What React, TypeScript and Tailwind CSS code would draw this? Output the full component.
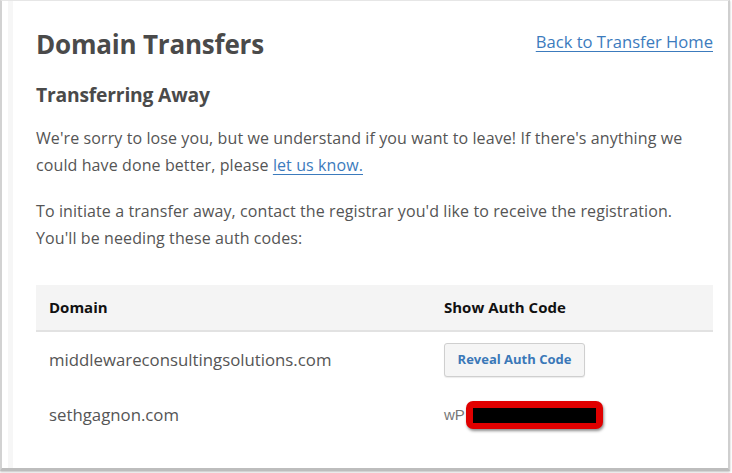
import React from "react";

const domains = [
  { name: "middlewareconsultingsolutions.com", revealed: false },
  { name: "sethgagnon.com", revealed: true },
];

const App = () => {
  return (
    <div className="w-[732px] h-[473px] bg-white overflow-hidden">
      <div className="w-[730px] h-[471px] bg-white border-l-2 border-t border-r-2 border-b-[3px] border-l-[#d2d2d2] border-t-[#e6e6e6] border-r-[#cfcfcf] border-b-[#bdbdbd] shadow-[0_1px_2px_rgba(0,0,0,0.25)]">
        <div className="ml-[6px] h-full border-l-[5px] border-[#f6f6f6] pl-[23px] pr-[15px] pt-[25px] font-['Open_Sans',sans-serif] text-[#555]">
          <div className="flex items-start justify-between">
            <h1 className="font-bold text-[26px] leading-[36px] text-[#4a4a4a] tracking-[-0.2px]">
              Domain Transfers
            </h1>
            <a href="#" className="mt-[6px] text-[16.6px] leading-[20px] text-[#3c7bbd] underline underline-offset-[3px]">
              Back to Transfer Home
            </a>
          </div>
          <h2 className="mt-[20px] font-bold text-[19.3px] leading-[26px] text-[#4a4a4a] tracking-[-0.2px]">
            Transferring Away
          </h2>
          <p className="mt-[17px] text-[16px] leading-[27px] tracking-[0.1px]">
            We're sorry to lose you, but we understand if you want to leave! If there's anything we
            <br />
            could have done better, please{" "}
            <a href="#" className="text-[#3c7bbd] underline underline-offset-[3px]">
              let us know.
            </a>
          </p>
          <p className="mt-[19px] text-[16px] leading-[27px] tracking-[0.1px]">
            To initiate a transfer away, contact the registrar you'd like to receive the registration.
            <br />
            You'll be needing these auth codes:
          </p>
          <table className="mt-[33px] w-full border-collapse">
            <thead>
              <tr className="bg-[#f4f4f4] border-b-2 border-[#e2e2e2]">
                <th className="h-[46px] w-[395px] pl-[13px] text-left font-bold text-[15px] text-[#111]">Domain</th>
                <th className="h-[46px] pl-[13px] text-left font-bold text-[15px] text-[#111]">Show Auth Code</th>
              </tr>
            </thead>
            <tbody>
              {domains.map((d) => (
                <tr key={d.name}>
                  <td className="h-[56px] pl-[13px] text-[16.8px]">{d.name}</td>
                  <td className="h-[56px] pl-[13px]">
                    {d.revealed ? (
                      <div className="flex items-center">
                        <span className="font-['Liberation_Sans',sans-serif] text-[15px] text-[#777]">wP</span>
                        <span className="ml-[1px] flex h-[28px] w-[137px] items-center rounded-[7px] bg-[#e00000] px-[7px] shadow-[1px_2px_3px_rgba(0,0,0,0.45)]">
                          <span className="block h-[15px] w-full bg-black" />
                        </span>
                      </div>
                    ) : (
                      <button className="h-[34px] w-[141px] rounded-[3px] border border-[#cfcfcf] bg-[#f5f5f5] text-[13px] font-bold text-[#3a78b8] shadow-[0_1px_1px_rgba(0,0,0,0.08)]">
                        Reveal Auth Code
                      </button>
                    )}
                  </td>
                </tr>
              ))}
            </tbody>
          </table>
        </div>
      </div>
    </div>
  );
};

export default App;
